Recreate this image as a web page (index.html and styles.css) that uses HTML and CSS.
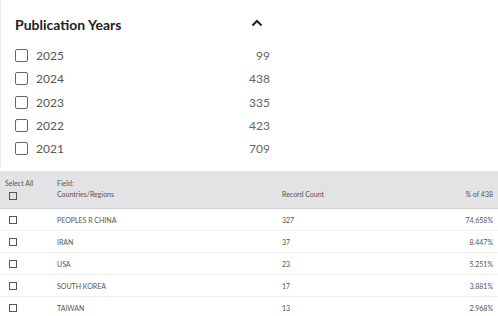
FILE: index.html
```html
<!DOCTYPE html>
<html lang="en">
<head>
  <meta charset="UTF-8">
  <title>Publication Years / Countries</title>
  <link rel="stylesheet" href="styles.css">
</head>
<body>
  <div class="facet">
    <div class="facet-head">
      <h3>Publication Years</h3>
      <svg class="chevron" width="12" height="8" viewBox="0 0 12 8"><path d="M1.5 6.5 L6 2 L10.5 6.5" fill="none" stroke="#222" stroke-width="2"/></svg>
    </div>
    <ul class="facet-list">
      <li><span class="box"></span><span class="year">2025</span><span class="count">99</span></li>
      <li><span class="box"></span><span class="year">2024</span><span class="count">438</span></li>
      <li><span class="box"></span><span class="year">2023</span><span class="count">335</span></li>
      <li><span class="box"></span><span class="year">2022</span><span class="count">423</span></li>
      <li><span class="box"></span><span class="year">2021</span><span class="count">709</span></li>
    </ul>
  </div>

  <table class="results">
    <thead>
      <tr>
        <th class="col-select">Select All<br><span class="mini-box"></span></th>
        <th class="col-field">Field:<br>Countries/Regions</th>
        <th class="col-count">Record Count</th>
        <th class="col-pct">% of 438</th>
      </tr>
    </thead>
    <tbody>
      <tr><td class="col-select"><span class="mini-box"></span></td><td>PEOPLES R CHINA</td><td>327</td><td class="col-pct">74.658%</td></tr>
      <tr><td class="col-select"><span class="mini-box"></span></td><td>IRAN</td><td>37</td><td class="col-pct">8.447%</td></tr>
      <tr><td class="col-select"><span class="mini-box"></span></td><td>USA</td><td>23</td><td class="col-pct">5.251%</td></tr>
      <tr><td class="col-select"><span class="mini-box"></span></td><td>SOUTH KOREA</td><td>17</td><td class="col-pct">3.881%</td></tr>
      <tr><td class="col-select"><span class="mini-box"></span></td><td>TAIWAN</td><td>13</td><td class="col-pct">2.968%</td></tr>
    </tbody>
  </table>
</body>
</html>
```

FILE: styles.css
```css
body { margin: 0; background: #fff; font-family: Lato, "Noto Sans", sans-serif; color: #333; }

.facet {
  width: 255px;
  height: 168px;
  border-left: 1px solid #ececec;
  padding: 0 0 0 14px;
  box-sizing: content-box;
}
.facet-head {
  display: flex;
  align-items: center;
  justify-content: space-between;
  height: 44px;
  padding-right: 7px;
}
.facet-head h3 {
  margin: 0;
  padding-top: 4px;
  font-size: 14px;
  font-weight: 700;
  color: #222;
}
.chevron { display: block; margin-top: 2px; }

.facet-list { list-style: none; margin: 0; padding: 0; }
.facet-list li {
  display: flex;
  align-items: center;
  height: 23.3px;
  font-size: 12px;
  color: #555;
}
.box {
  width: 11px;
  height: 11px;
  border: 1.6px solid #666;
  border-radius: 2px;
  margin-right: 8px;
}
.year { flex: 1; }
.count { color: #666; }

.results {
  width: 100%;
  border-collapse: collapse;
  margin-top: 3px;
  font-size: 7px;
  color: #555;
}
.results th {
  background: #e3e3e5;
  font-weight: 400;
  text-align: left;
  vertical-align: bottom;
  height: 35px;
  box-sizing: border-box;
  padding: 7px 5px 8px 5px;
  line-height: 11px;
  border-bottom: 1px solid #d0d0d2;
}
.results td {
  height: 21px;
  padding: 0 5px;
  border-bottom: 1px solid #eeeeee;
}
.results tr:last-child td { border-bottom: none; }
.col-select { width: 38px; }
.results td.col-select { padding-left: 9px; }
.col-field { width: 225px; }
.col-pct { text-align: right; }
.results th.col-pct { text-align: right; }
.mini-box {
  display: inline-block;
  width: 6px;
  height: 6px;
  border: 1px solid #555;
  vertical-align: middle;
}
.results th .mini-box { margin-left: 4px; margin-top: 2px; }
```
